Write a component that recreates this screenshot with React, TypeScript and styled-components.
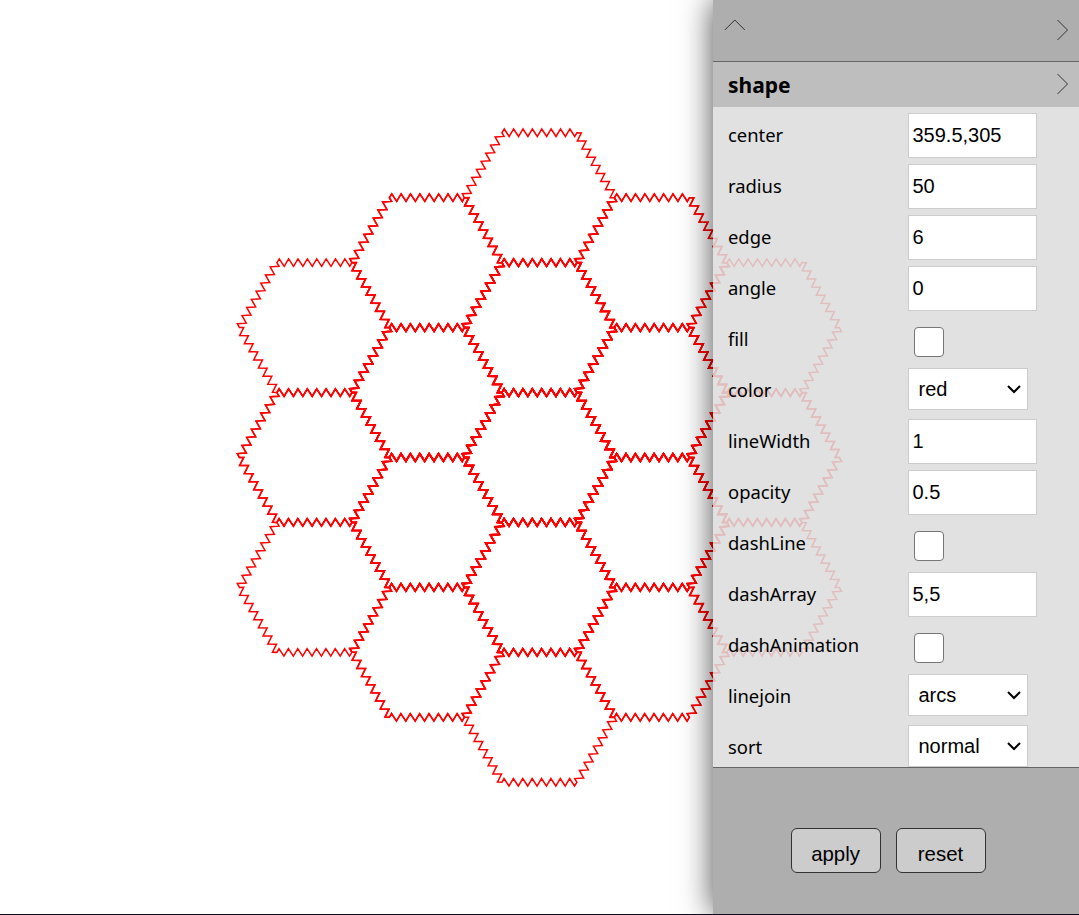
import React from "react";
import styled, { createGlobalStyle } from "styled-components";

const Global = createGlobalStyle`
  * { box-sizing: border-box; }
  html, body { margin: 0; height: 100%; overflow: hidden; background: #fff; }
  body { font-family: "Noto Sans", sans-serif; color: #000; }
`;

const Page = styled.div`
  position: relative;
  display: flex;
  justify-content: flex-end;
  width: 1079px;
  height: 915px;
  overflow: hidden;
  border-bottom: 1px solid #120a22;
`;

const Canvas = styled.svg`
  position: absolute;
  inset: 0;
  width: 1079px;
  height: 914px;
`;

const Panel = styled.aside`
  position: relative;
  display: flex;
  flex-direction: column;
  width: 366px;
  height: 914px;
  box-shadow: 0 0 30px rgba(0, 0, 0, 0.7);
`;

const Header = styled.header`
  display: flex;
  flex: none;
  justify-content: space-between;
  height: 62px;
  padding: 19px 10px 0 11px;
  background: #aeaeae;
  border-bottom: 1px solid #666;
`;

const SectionTitle = styled.h2`
  display: flex;
  flex: none;
  justify-content: space-between;
  height: 45px;
  margin: 0;
  padding: 0 10px 0 15px;
  background: #bebebe;
  font: 700 21px/46px "Noto Sans", sans-serif;
`;

const Chevron = styled.svg<{ $top?: number }>`
  flex: none;
  margin-top: ${(p) => p.$top ?? 0}px;
  fill: none;
  stroke: #333;
  stroke-width: 1;
`;

const Fields = styled.div`
  flex: none;
  height: 660px;
  overflow: hidden;
  background: rgba(220, 220, 220, 0.86);
`;

const Row = styled.label`
  display: flex;
  align-items: flex-start;
  height: 51px;
  padding: 6px 0 0 15px;
`;

const Name = styled.span`
  width: 180px;
  font-size: 18.4px;
  line-height: 43px;
`;

const TextInput = styled.input`
  width: 129px;
  height: 45px;
  padding: 0 3.5px 1px;
  border: 1px solid #ccc;
  border-radius: 0;
  outline: none;
  background: #fff;
  color: #000;
  font: 20px "Liberation Sans", Arial, sans-serif;
`;

const Check = styled.input`
  appearance: none;
  width: 30px;
  height: 30px;
  margin: 10px 0 0 6px;
  border: 1px solid #767676;
  border-radius: 4px;
  background: #fff;
`;

const Select = styled.span`
  display: flex;
  align-items: center;
  justify-content: space-between;
  width: 120px;
  height: 42px;
  padding: 0 5px 0 9.5px;
  border: 1px solid #ccc;
  background: #fff;
  font: 20px "Liberation Sans", Arial, sans-serif;

  svg { fill: none; stroke: #000; stroke-width: 2; }
`;

const Footer = styled.footer`
  display: flex;
  flex: 1;
  gap: 15px;
  align-items: flex-start;
  padding: 60px 0 0 78px;
  background: #aeaeae;
  border-top: 1px solid #666;
`;

const Button = styled.button`
  width: 90px;
  height: 45px;
  padding: 7px 1px 0 0;
  border: 1px solid #333;
  border-radius: 6px;
  background: #ccc;
  color: #000;
  font: 20.4px "Liberation Sans", Arial, sans-serif;
`;

const CX = 539.4;
const CY = 457.5;
const R = 75;
const WAVES = 8;
const AMP = 3.75;
const SKEW = 0.25;

/* A closed hexagon whose sides are zigzags alternating outward and inward. */
function zigzagHexagon(cx: number, cy: number) {
  const pts: string[] = [];
  for (let side = 0; side < 6; side++) {
    const a = (side * Math.PI) / 3;
    const b = a + Math.PI / 3;
    const n = a + Math.PI / 6;
    const [x0, y0] = [cx + R * Math.cos(a), cy + R * Math.sin(a)];
    const [x1, y1] = [cx + R * Math.cos(b), cy + R * Math.sin(b)];
    pts.push(`${x0.toFixed(2)},${y0.toFixed(2)}`);
    for (let i = 0; i < WAVES * 2; i++) {
      const outward = i % 2 === 0;
      const t = (i + 0.5) / (WAVES * 2) + (outward ? 0 : SKEW / R);
      const s = outward ? AMP : -AMP;
      const x = x0 + (x1 - x0) * t + s * Math.cos(n);
      const y = y0 + (y1 - y0) * t + s * Math.sin(n);
      pts.push(`${x.toFixed(2)},${y.toFixed(2)}`);
    }
  }
  return pts.join(" ");
}

/* Each of the seven inner cells draws itself and its neighbours, so cells overlap. */
const directions = [[0, 0], [1, 0], [0, 1], [-1, 1], [-1, 0], [0, -1], [1, -1]];
const hexagons = directions.flatMap(([q1, r1]) =>
  directions.map(([q2, r2]) => {
    const q = q1 + q2;
    const r = r1 + r2;
    return zigzagHexagon(CX + q * R * 1.5, CY + (r + q / 2) * R * Math.sqrt(3));
  })
);

type Field = { name: string; value?: string; kind?: "check" | "select" };

const fields: Field[] = [
  { name: "center", value: "359.5,305" },
  { name: "radius", value: "50" },
  { name: "edge", value: "6" },
  { name: "angle", value: "0" },
  { name: "fill", kind: "check" },
  { name: "color", value: "red", kind: "select" },
  { name: "lineWidth", value: "1" },
  { name: "opacity", value: "0.5" },
  { name: "dashLine", kind: "check" },
  { name: "dashArray", value: "5,5" },
  { name: "dashAnimation", kind: "check" },
  { name: "linejoin", value: "arcs", kind: "select" },
  { name: "sort", value: "normal", kind: "select" },
];

function Control({ value, kind }: Field) {
  if (kind === "check") return <Check type="checkbox" />;
  if (kind === "select")
    return (
      <Select>
        {value}
        <svg width="16" height="10" viewBox="0 0 16 10">
          <path d="M2 2l6 6 6-6" />
        </svg>
      </Select>
    );
  return <TextInput defaultValue={value} />;
}

export default function App() {
  return (
    <Page>
      <Global />
      <Canvas viewBox="0 0 1079 914">
        {hexagons.map((points, i) => (
          <polygon key={i} points={points} fill="none" stroke="red" strokeWidth={1.5} />
        ))}
      </Canvas>
      <Panel>
        <Header>
          <Chevron width="22" height="12" viewBox="0 0 22 12">
            <path d="M0.8 11L10.8 1L20.8 11" />
          </Chevron>
          <Chevron width="12" height="22" viewBox="0 0 12 22">
            <path d="M0.5 1L10.5 11L0.5 21" />
          </Chevron>
        </Header>
        <SectionTitle>
          shape
          <Chevron $top={11} width="12" height="22" viewBox="0 0 12 22">
            <path d="M0.5 1L10.5 11L0.5 21" />
          </Chevron>
        </SectionTitle>
        <Fields>
          {fields.map((f) => (
            <Row key={f.name}>
              <Name>{f.name}</Name>
              <Control {...f} />
            </Row>
          ))}
        </Fields>
        <Footer>
          <Button>apply</Button>
          <Button>reset</Button>
        </Footer>
      </Panel>
    </Page>
  );
}
